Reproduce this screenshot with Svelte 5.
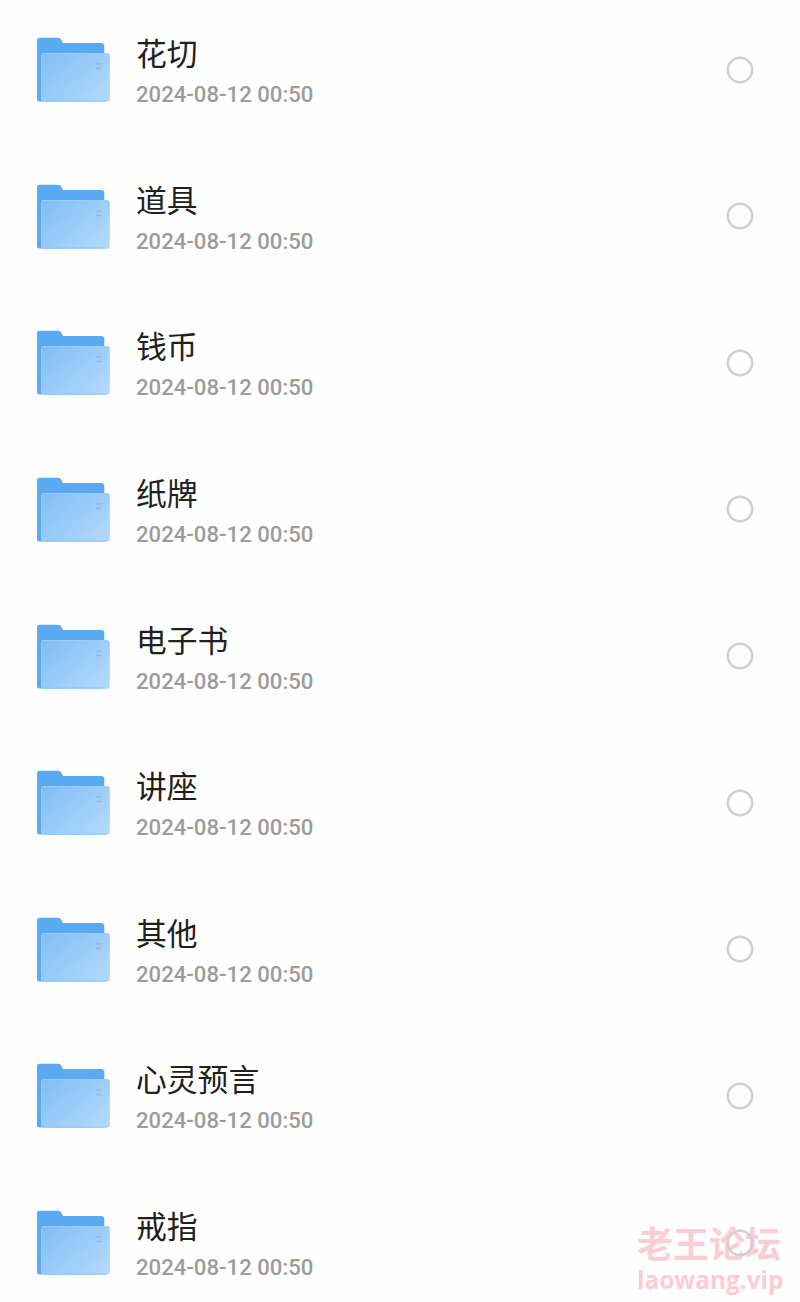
<script lang="ts">
	const names = ['花切', '道具', '钱币', '纸牌', '电子书', '讲座', '其他', '心灵预言', '戒指'];

	let folders = $state(
		names.map((name) => ({ name, modified: '2024-08-12 00:50', selected: false }))
	);
</script>

<main class="page">
	<ul class="folders">
		{#each folders as folder}
			<li class="folder">
				<svg class="folder-icon" viewBox="0 0 74 65" aria-hidden="true">
					<defs>
						<linearGradient id="front" x1="0" y1="0.1" x2="1" y2="0.9">
							<stop offset="0" stop-color="#82bff4" />
							<stop offset="1" stop-color="#b3d9fc" />
						</linearGradient>
					</defs>
					<path
						d="M3.500 .8H22Q24.500 .8 25.500 3L27 6H65Q68.300 6 68.300 9V62Q68 64.500 65 64.500H3.500Q1 64.500 1 62V3.300Q1 .8 3.500 .8Z"
						fill="#59aaf0"
					/>
					<path
						d="M7.500 16H71Q73.800 16 73.800 18.500V62Q73.800 64.500 71 64.500H7.500Q5 64.500 5 62V18.500Q5 16 7.500 16Z"
						fill="url(#front)"
					/>
					<path d="M6 16.500H72M5.500 18V63" stroke="#a2d0f8" stroke-width="1" opacity=".7" />
					<path d="M6 64H71" stroke="#8fc5f5" stroke-width="1" />
					<path d="M60 27H65.500M60 31.500H65.500" stroke="#8dbceb" stroke-width="1.300" />
				</svg>
				<div class="info">
					<div class="name">{folder.name}</div>
					<div class="date">{folder.modified}</div>
				</div>
				<button
					class="check"
					class:selected={folder.selected}
					aria-label={folder.name}
					onclick={() => (folder.selected = !folder.selected)}
				>
					<svg viewBox="0 0 28 28" aria-hidden="true">
						<circle cx="14" cy="14" r="12.2" />
					</svg>
				</button>
			</li>
		{/each}
	</ul>

	<div class="watermark">
		<div class="site">老王论坛</div>
		<div class="domain">laowang.vip</div>
	</div>
</main>

<style>
	:global(body) {
		background: #fefefe;
	}

	.page {
		position: relative;
		box-sizing: border-box;
		height: 1302px;
		overflow: hidden;
		font-family: Roboto, 'Noto Sans CJK SC', sans-serif;
	}

	.folders {
		display: flex;
		flex-direction: column;
		gap: 81.625px;
		margin: 0;
		padding: 37px 46px 0 36px;
		list-style: none;
	}

	.folder {
		display: flex;
		align-items: center;
		height: 65px;
	}

	.folder-icon {
		width: 74px;
		height: 65px;
		margin-right: 26px;
	}

	.info {
		flex: 1;
		padding-top: 8px;
	}

	.name {
		font-family: 'Noto Sans CJK SC', sans-serif;
		font-size: 30.8px;
		line-height: 42px;
		color: #202020;
	}

	.date {
		font-size: 22.15px;
		font-weight: 500;
		line-height: 43px;
		color: #9c9c9c;
	}

	.check {
		width: 28px;
		height: 28px;
		padding: 0;
		border: none;
		background: none;
		cursor: pointer;
	}

	.check svg {
		display: block;
	}

	.check circle {
		fill: none;
		stroke: #d0d0d0;
		stroke-width: 2.5;
	}

	.check.selected circle {
		fill: #59aaf0;
	}

	.watermark {
		position: absolute;
		top: 1217px;
		left: 637px;
		color: #fccdd6;
		font-weight: 700;
		white-space: nowrap;
		pointer-events: none;
		z-index: -1;
	}

	.site {
		font-family: 'Noto Sans CJK SC', sans-serif;
		font-size: 36px;
		line-height: 50px;
	}

	.domain {
		font-family: 'Open Sans', sans-serif;
		font-size: 24.4px;
		line-height: 26px;
	}
</style>
